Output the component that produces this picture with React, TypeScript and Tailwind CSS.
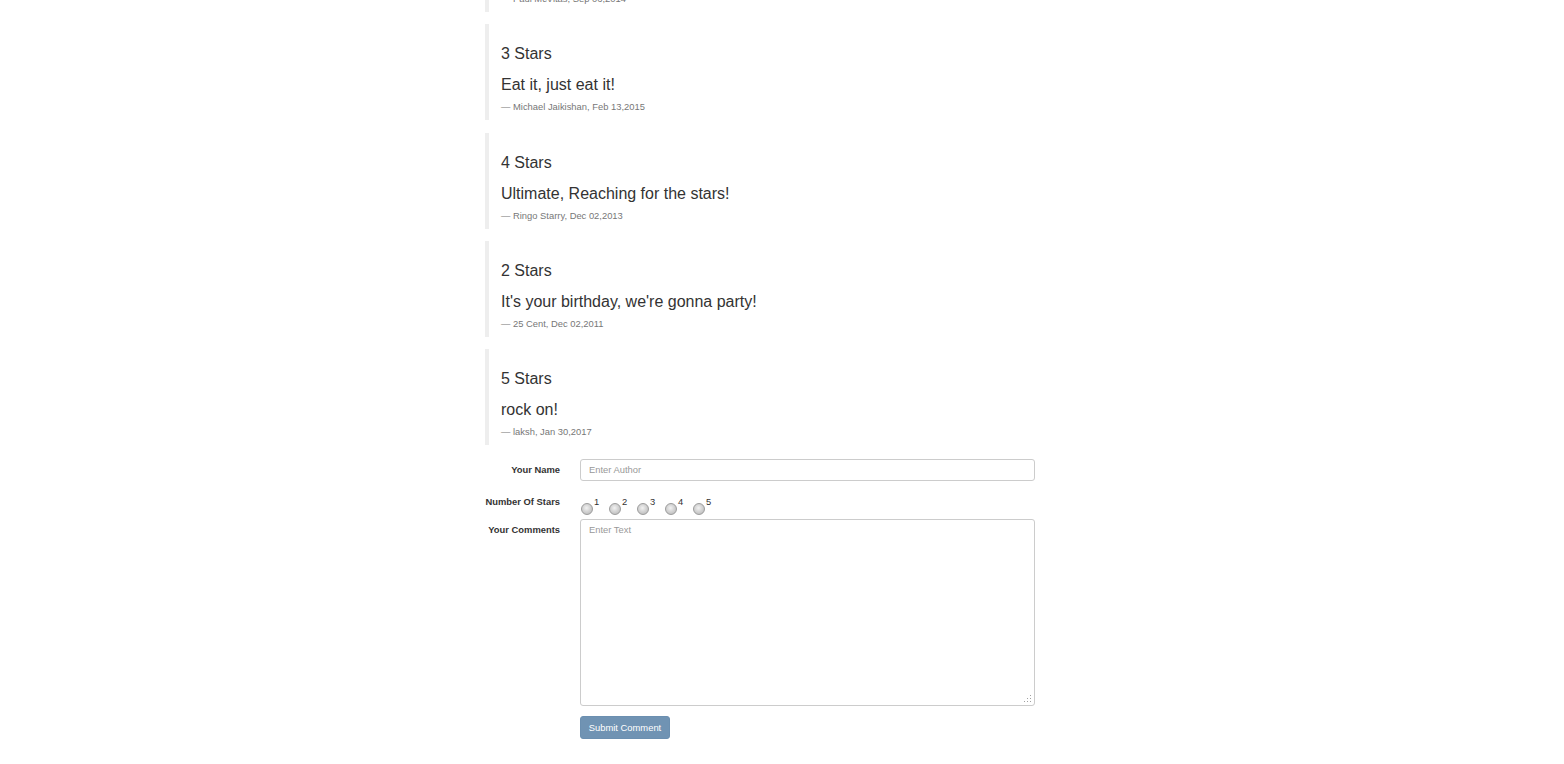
import React from "react"

interface Review {
  rating: number
  comment: string
  author: string
  date: string
}

const reviews: Review[] = [
  { rating: 4, comment: "Best cupcakes in town!", author: "Paul McVitas", date: "Sep 06,2014" },
  { rating: 3, comment: "Eat it, just eat it!", author: "Michael Jaikishan", date: "Feb 13,2015" },
  { rating: 4, comment: "Ultimate, Reaching for the stars!", author: "Ringo Starry", date: "Dec 02,2013" },
  { rating: 2, comment: "It's your birthday, we're gonna party!", author: "25 Cent", date: "Dec 02,2011" },
  { rating: 5, comment: "rock on!", author: "laksh", date: "Jan 30,2017" },
]

function ReviewQuote({ review, first }: { review: Review; first?: boolean }) {
  return (
    <blockquote
      className={`h-[96px] border-l-[4px] border-[#eeeeee] pl-[12px] pt-[8px] mb-[12.33px] ${first ? "-mt-[84px]" : ""}`}
    >
      <h3 className="mt-[13px] text-[16px] leading-[18px] text-[#333]">{review.rating} Stars</h3>
      <p className="mt-[10px] text-[16px] leading-[24px] text-[#333]">{review.comment}</p>
      <footer className="mt-[4px] text-[9.38px] leading-[13px] text-[#777]">
        {"\u2014\u00a0"}
        {review.author}, {review.date}
      </footer>
    </blockquote>
  )
}

function FormRow({ label, children }: { label: string; children: React.ReactNode }) {
  return (
    <div className="flex mb-[10px]">
      <label className="w-[95px] shrink-0 pr-[10px] pt-[4.7px] text-right text-[9.38px] leading-[13.4px] font-bold text-[#333]">
        {label}
      </label>
      <div className="w-[475px] px-[10px]">{children}</div>
    </div>
  )
}

export default function App() {
  return (
    <div className="min-h-[764px] bg-white" style={{ fontFamily: '"Liberation Sans", Arial, sans-serif' }}>
      <div className="ml-[475px] w-[570px]">
        <div className="px-[10px]">
          {reviews.map((r, i) => (
            <ReviewQuote key={i} review={r} first={i === 0} />
          ))}
        </div>

        <form className="pt-[1.67px]" onSubmit={(e) => e.preventDefault()}>
          <FormRow label="Your Name">
            <input
              type="text"
              placeholder="Enter Author"
              className="block h-[22px] w-full rounded-[3px] border border-[#cccccc] px-[8px] text-[9.38px] text-[#555] placeholder:text-[#999] outline-none"
            />
          </FormRow>

          <FormRow label="Number Of Stars">
            <div className="flex h-[18px]">
              {[1, 2, 3, 4, 5].map((n) => (
                <label key={n} className="flex w-[28px] items-start">
                  <span className="ml-[1px] mt-[11.5px] h-[12px] w-[12px] shrink-0 rounded-full border border-[#9c9c9c] bg-[radial-gradient(circle_at_45%_40%,#f2f2f2_0%,#d4d4d4_45%,#b3b3b3_100%)]" />
                  <span className="ml-[1px] mt-[5px] text-[9.38px] leading-[13.4px] text-[#333]">{n}</span>
                </label>
              ))}
            </div>
          </FormRow>

          <FormRow label="Your Comments">
            <div className="relative">
              <textarea
                placeholder="Enter Text"
                className="block h-[187px] w-full resize-none rounded-[3px] border border-[#cccccc] px-[8px] py-[3.5px] text-[9.38px] leading-[13.4px] text-[#555] placeholder:text-[#999] outline-none"
              />
              <svg className="absolute bottom-[3px] right-[3px]" width="8" height="8" viewBox="0 0 8 8">
                <g fill="#a0a0a0">
                  <rect x="6" y="0" width="1" height="1" />
                  <rect x="3" y="3" width="1" height="1" />
                  <rect x="6" y="3" width="1" height="1" />
                  <rect x="0" y="6" width="1" height="1" />
                  <rect x="3" y="6" width="1" height="1" />
                  <rect x="6" y="6" width="1" height="1" />
                </g>
              </svg>
            </div>
          </FormRow>

          <div className="flex pl-[105px]">
            <button
              type="submit"
              className="h-[23px] w-[90px] rounded-[3px] border border-[#6b8fb0] bg-[#7093b3] text-[9.38px] text-white"
            >
              Submit Comment
            </button>
          </div>
        </form>
      </div>
    </div>
  )
}
